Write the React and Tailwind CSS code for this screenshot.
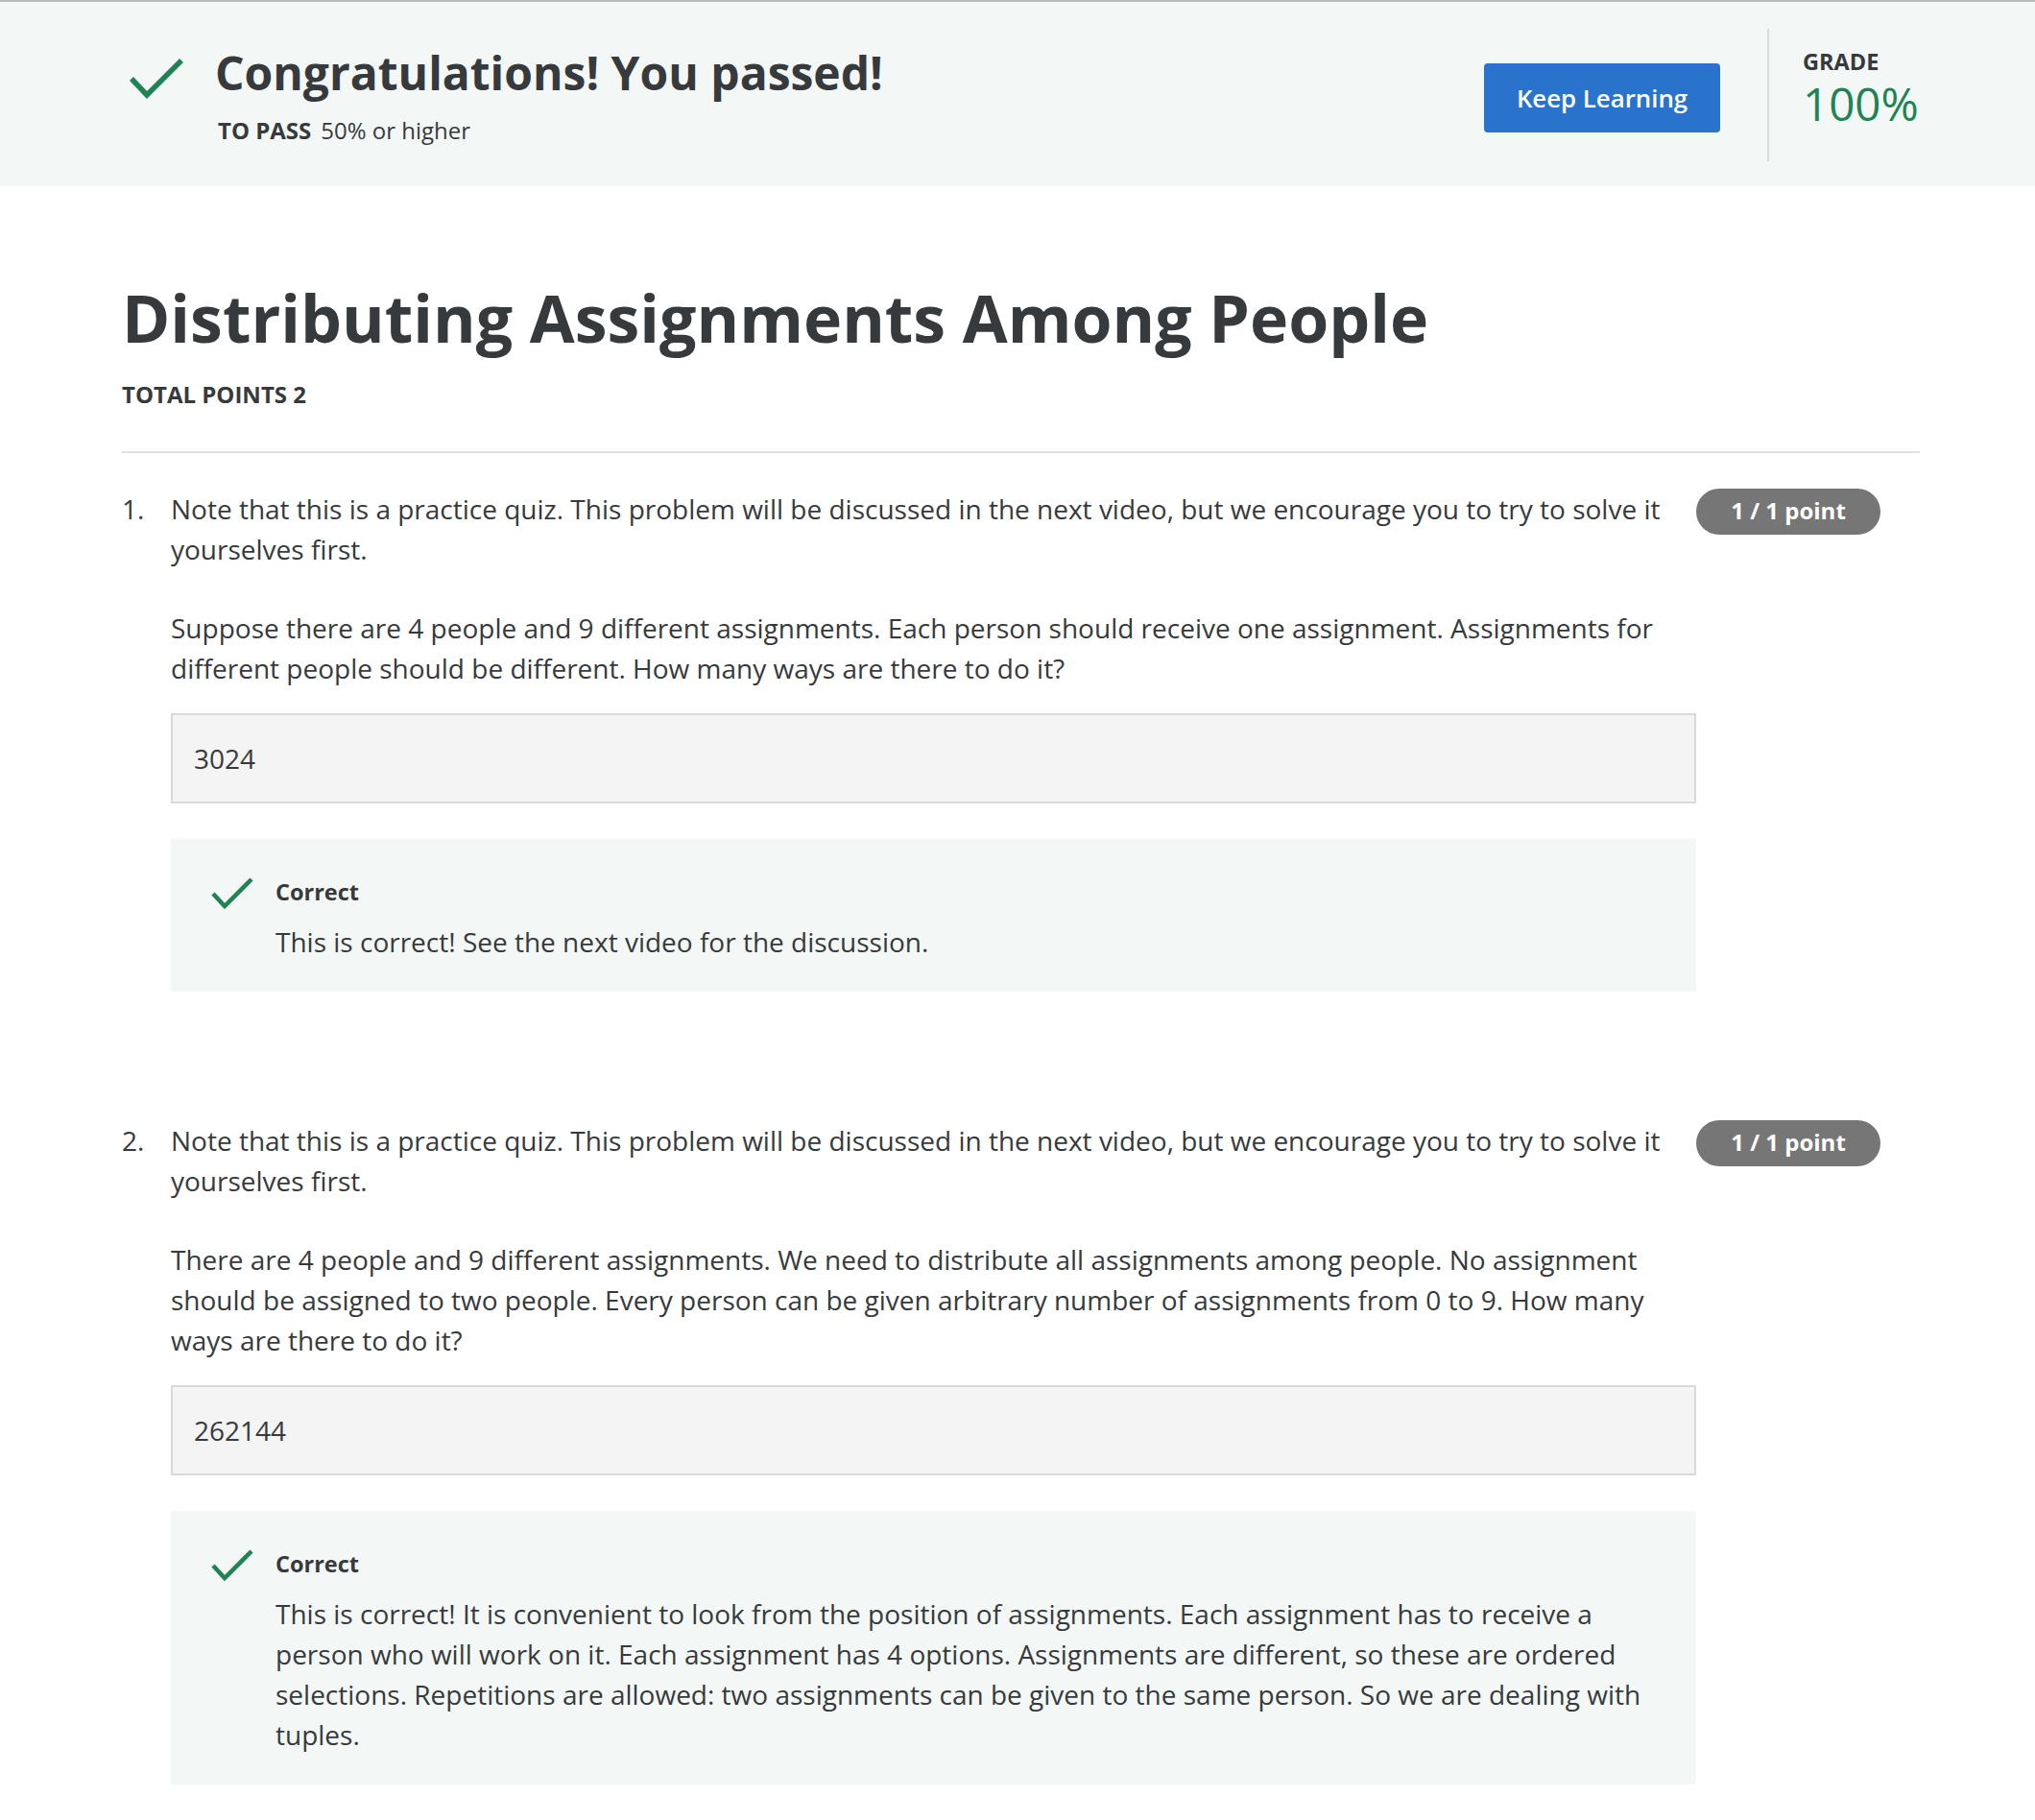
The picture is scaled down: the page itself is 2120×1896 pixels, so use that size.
import React from 'react';

const questions = [
  {
    num: '1.',
    intro: 'Note that this is a practice quiz. This problem will be discussed in the next video, but we encourage you to try to solve it yourselves first.',
    body: 'Suppose there are 4 people and 9 different assignments. Each person should receive one assignment. Assignments for different people should be different. How many ways are there to do it?',
    answer: '3024',
    feedback: 'This is correct! See the next video for the discussion.',
  },
  {
    num: '2.',
    intro: 'Note that this is a practice quiz. This problem will be discussed in the next video, but we encourage you to try to solve it yourselves first.',
    body: 'There are 4 people and 9 different assignments. We need to distribute all assignments among people. No assignment should be assigned to two people. Every person can be given arbitrary number of assignments from 0 to 9. How many ways are there to do it?',
    answer: '262144',
    feedback: 'This is correct! It is convenient to look from the position of assignments. Each assignment has to receive a person who will work on it. Each assignment has 4 options. Assignments are different, so these are ordered selections. Repetitions are allowed: two assignments can be given to the same person. So we are dealing with tuples.',
  },
];

const BigCheck = () => (
  <svg width="56" height="44" viewBox="0 0 56 44" className="mt-[14px] shrink-0">
    <polyline points="2,22 18,39 54,3" fill="none" stroke="#1f8354" strokeWidth="5.5" />
  </svg>
);

const SmallCheck = () => (
  <svg width="44" height="34" viewBox="0 0 44 34" className="shrink-0">
    <polyline points="2,18 14,31 42,3" fill="none" stroke="#1f8354" strokeWidth="4.5" />
  </svg>
);

const Question = ({ q, first }) => (
  <div className={`flex ${first ? 'mt-[37px]' : 'mt-[134px]'}`}>
    <div className="w-[51px] shrink-0 text-[28px] leading-[42px]">{q.num}</div>
    <div className="w-[1589px] shrink-0">
      <p className="text-[28px] leading-[42px]">{q.intro}</p>
      <p className="mt-10 text-[28px] leading-[42px]">{q.body}</p>
      {/* answer box */}
      <div className="mt-[26px] h-[94px] flex items-center border-2 border-[#d9d9d9] bg-[#f4f4f4] px-[22px] text-[28px]">
        {q.answer}
      </div>
      <div className="mt-[37px] flex bg-[#f3f8f6] pl-[42px] pr-[44px] pt-[39px] pb-[31px]">
        <SmallCheck />
        <div className="ml-[23px]">
          <div className="text-[23.5px] leading-[32px] font-bold">Correct</div>
          <p className="mt-[15px] text-[28px] leading-[42px]">{q.feedback}</p>
        </div>
      </div>
    </div>
    <div className="w-[192px] shrink-0">
      <span className="flex h-12 items-center justify-center rounded-full bg-[#767676] pb-[3px] text-[24px] font-bold text-white">
        1 / 1 point
      </span>
    </div>
  </div>
);

export default function App() {
  return (
    <div className="min-h-screen bg-white font-['Open_Sans',sans-serif] text-[#373a3c]">
      <header className="border-t-2 border-[#b9bdbc] bg-[#f3f8f6]">
        <div className="flex h-[192px] pl-[127px] pr-[120px]">
          <div className="flex flex-1 items-start pt-[44px] pl-2">
            <BigCheck />
            <div className="ml-[33px]">
              <h1 className="text-[48px] leading-[60px] font-bold">Congratulations! You passed!</h1>
              <p className="ml-[3px] mt-[14px] text-[24px] leading-[32px]">
                <span className="font-bold">TO PASS</span>
                <span className="ml-[10px]">50% or higher</span>
              </p>
            </div>
          </div>
          <div className="flex items-start">
            <button className="mt-[64px] h-[72px] w-[246px] rounded-[4px] bg-[#2a73cc] text-[25.8px] font-semibold text-white">
              Keep Learning
            </button>
            <div className="ml-[49px] mt-[28px] h-[138px] w-[2px] bg-[#dcdcdc]"></div>
            <div className="ml-[35px] mt-[48px] w-[122px]">
              <div className="text-[23.5px] leading-[28px] font-bold">GRADE</div>
              <div className="mt-[4px] text-[47.5px] leading-[52px] text-[#1f8354]">100%</div>
            </div>
          </div>
        </div>
      </header>

      <main className="pl-[127px] pr-[120px] pt-[95px] pb-10">
        <h2 className="text-[68px] leading-[84px] font-bold">Distributing Assignments Among People</h2>
        <div className="mt-[23px] text-[24px] leading-[30px] font-bold">TOTAL POINTS 2</div>
        <div className="mt-[44px] h-[2px] bg-[#e1e1e1]"></div>
        {questions.map((q, i) => (
          <Question key={q.num} q={q} first={i === 0} />
        ))}
      </main>
    </div>
  );
}
